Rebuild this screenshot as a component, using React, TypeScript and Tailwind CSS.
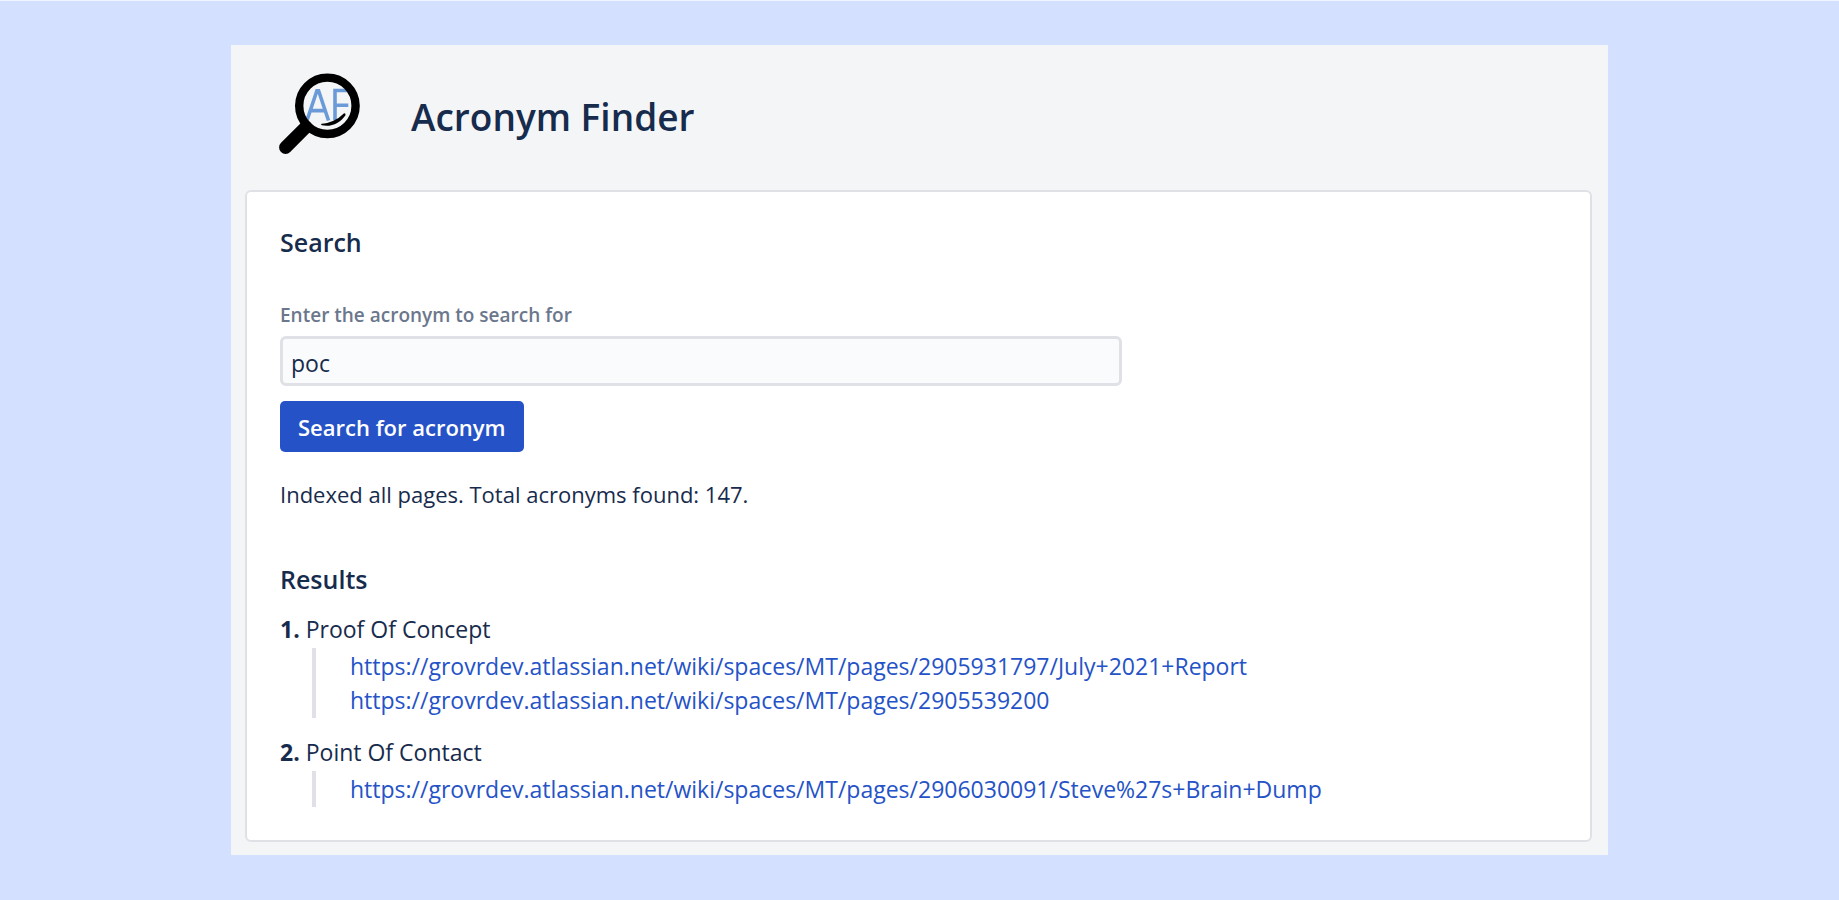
import { useState } from "react";

const results = [
  {
    name: "Proof Of Concept",
    links: [
      "https://grovrdev.atlassian.net/wiki/spaces/MT/pages/2905931797/July+2021+Report",
      "https://grovrdev.atlassian.net/wiki/spaces/MT/pages/2905539200",
    ],
  },
  {
    name: "Point Of Contact",
    links: [
      "https://grovrdev.atlassian.net/wiki/spaces/MT/pages/2906030091/Steve%27s+Brain+Dump",
    ],
  },
];

function Logo() {
  return (
    <svg viewBox="0 0 82 82" className="size-[82px] shrink-0" aria-hidden="true">
      <clipPath id="lens">
        <circle cx="48.4" cy="32.8" r="24.500" />
      </clipPath>
      <g clipPath="url(#lens)" fill="none" stroke="#6a9bd8" strokeWidth="3.600">
        <path d="M27.800 48 37.900 17.800h1.700L49.500 47.500M30.500 37.600h16.500" />
        <path d="M56 47.200V17.500h17M56 32.300h13.300" />
      </g>
      <circle cx="48.4" cy="32.8" r="28.200" fill="none" stroke="#000" strokeWidth="8.400" />
      <path d="M27 54 6.600 74.400" stroke="#000" strokeWidth="13" strokeLinecap="round" />
      <path
        d="M42.500 50.700C50 50.500 58 47.300 64.800 40.600Q66.700 39.600 66.500 42.200C61 50 52.500 54.300 42.800 52.300Q41.400 51.500 42.500 50.700Z"
        fill="#000"
      />
    </svg>
  );
}

export default function App() {
  const [query, setQuery] = useState("poc");

  return (
    <div className="min-h-screen border-t border-[#eff4ff] bg-[#d3e0ff] px-4 py-11 font-['Open_Sans',sans-serif] text-[23px] leading-[34px] text-[#172b4d]">
      <main className="mx-auto max-w-[1377px] bg-[#f4f5f7] pr-4 pb-[13px] pl-[14px]">
        <header className="flex items-center gap-[50px] pt-7 pb-[35px] pl-[34px]">
          <Logo />
          <h1 className="pt-1.5 text-[37px] leading-[52px] font-semibold">Acronym Finder</h1>
        </header>

        <div className="rounded-md border-2 border-[#dfe1e6] bg-white px-[33px] pt-8 pb-[33px]">
          <section>
            <h2 className="text-[25px] leading-9 font-semibold">Search</h2>
            <form onSubmit={(e) => e.preventDefault()} className="pt-[41px]">
              <label
                htmlFor="acronym"
                className="block text-[19px] leading-7 font-semibold text-[#6b778c]"
              >
                Enter the acronym to search for
              </label>
              <input
                id="acronym"
                type="text"
                value={query}
                onChange={(e) => setQuery(e.target.value)}
                className="mt-[7px] block h-[50px] w-full max-w-[842px] rounded-md border-3 border-[#dfe1e6] bg-[#fafbfc] px-2 pt-1 outline-none"
              />
              <button
                type="submit"
                className="mt-[15px] h-[51px] rounded-[5px] bg-[#2553c7] px-[18px] text-[22px] font-semibold text-white"
              >
                Search for acronym
              </button>
            </form>
            <p className="pt-[25px] text-[22px]">Indexed all pages. Total acronyms found: 147.</p>
          </section>

          <section className="pt-[50px]">
            <h2 className="text-[25px] leading-9 font-semibold">Results</h2>
            <ol className="flex flex-col gap-[17px] pt-[15px]">
              {results.map((result, i) => (
                <li key={result.name}>
                  <p>
                    <strong className="font-bold">{i + 1}.</strong> {result.name}
                  </p>
                  <ul className="mt-0.5 ml-8 border-l-4 border-[#dfe1e6] py-px pl-[34px]">
                    {result.links.map((link) => (
                      <li key={link}>
                        <a href={link} className="break-all text-[#2553c7] hover:underline">
                          {link}
                        </a>
                      </li>
                    ))}
                  </ul>
                </li>
              ))}
            </ol>
          </section>
        </div>
      </main>
    </div>
  );
}
